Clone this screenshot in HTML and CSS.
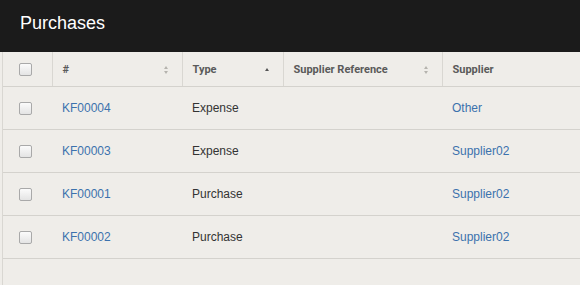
FILE: index.html
```html
<!DOCTYPE html>
<html>
<head>
<meta charset="utf-8">
<link rel="stylesheet" href="styles.css">
</head>
<body>
<header class="topbar"><h1 class="title">Purchases</h1></header>
<div class="grid">
  <table class="tbl">
    <colgroup>
      <col class="c-check"><col class="c-num"><col class="c-type"><col class="c-ref"><col class="c-sup">
    </colgroup>
    <thead>
      <tr>
        <th class="th-check"><span class="cb"></span></th>
        <th><div class="thc"><span>#</span><span class="sort both"></span></div></th>
        <th><div class="thc"><span>Type</span><span class="sort up"></span></div></th>
        <th><div class="thc"><span>Supplier Reference</span><span class="sort both"></span></div></th>
        <th><div class="thc"><span>Supplier</span></div></th>
      </tr>
    </thead>
    <tbody>
      <tr><td class="td-check"><span class="cb"></span></td><td><a class="lnk">KF00004</a></td><td>Expense</td><td></td><td><a class="lnk">Other</a></td></tr>
      <tr><td class="td-check"><span class="cb"></span></td><td><a class="lnk">KF00003</a></td><td>Expense</td><td></td><td><a class="lnk">Supplier02</a></td></tr>
      <tr><td class="td-check"><span class="cb"></span></td><td><a class="lnk">KF00001</a></td><td>Purchase</td><td></td><td><a class="lnk">Supplier02</a></td></tr>
      <tr><td class="td-check"><span class="cb"></span></td><td><a class="lnk">KF00002</a></td><td>Purchase</td><td></td><td><a class="lnk">Supplier02</a></td></tr>
    </tbody>
  </table>
</div>
</body>
</html>
```
FILE: styles.css
```css
html, body { margin: 0; padding: 0; }
body {
  background: #efede9;
  font-family: "Liberation Sans", Arial, sans-serif;
  width: 580px;
  height: 285px;
  overflow: hidden;
}
.topbar {
  background: #1b1b1b;
  height: 52px;
  display: flex;
  align-items: center;
  padding-left: 20px;
}
.title {
  margin: 0;
  color: #ffffff;
  font-size: 18px;
  font-weight: normal;
  padding-bottom: 6px;
}
.grid {
  margin-left: 2px;
  border-left: 1px solid #d9d7d2;
  height: 233px;
}
.tbl {
  border-collapse: collapse;
  table-layout: fixed;
  width: 578px;
}
.c-check { width: 49px; }
.c-num { width: 130px; }
.c-type { width: 101px; }
.c-ref { width: 159px; }
.c-sup { width: auto; }
.tbl th {
  height: 34px;
  padding: 0 0 0 10px;
  text-align: left;
  font-family: Roboto, "Liberation Sans", sans-serif;
  font-weight: 700;
  font-size: 11px;
  color: #5a5a5a;
  border-right: 1px solid #d9d7d2;
  border-bottom: 1px solid #d4d2cd;
  vertical-align: middle;
}
.tbl th:last-child { border-right: none; }
.tbl th.th-check { padding: 0; text-align: center; }
.thc {
  display: flex;
  justify-content: space-between;
  align-items: center;
  padding-right: 13px;
  padding-top: 1px;
}
.sort { display: inline-block; width: 5px; height: 8px; position: relative; }
.sort.both::before, .sort.both::after, .sort.up::before {
  content: "";
  position: absolute;
  left: 0;
  border-left: 2.5px solid transparent;
  border-right: 2.5px solid transparent;
}
.sort.both::before { top: 0; border-bottom: 3px solid #b5b3ae; }
.sort.both::after { bottom: 0; border-top: 3px solid #b5b3ae; }
.sort.up::before { top: 2px; border-bottom: 3px solid #555; }
.tbl td {
  height: 42px;
  padding: 0 0 0 10px;
  font-size: 12px;
  color: #333;
  border-bottom: 1px solid #d4d2cd;
  vertical-align: middle;
}
.tbl td.td-check { padding: 0; text-align: center; }
.lnk { color: #3c72ad; text-decoration: none; }
.cb {
  display: inline-block;
  width: 11px;
  height: 11px;
  border: 1px solid #a9a9a9;
  border-radius: 2px;
  background: linear-gradient(#fbfbfb, #e4e4e4);
  vertical-align: middle;
  margin-left: -4px;
}
```
